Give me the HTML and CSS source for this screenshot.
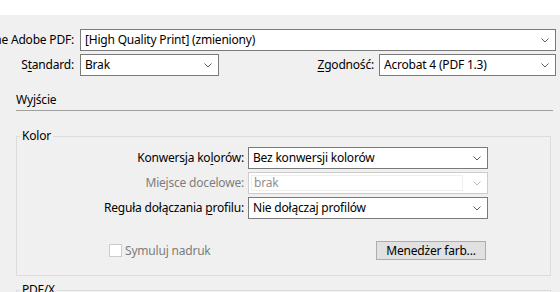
FILE: index.html
```html
<!DOCTYPE html>
<html lang="pl">
<head>
<meta charset="utf-8">
<title>Eksport Adobe PDF</title>
<link rel="stylesheet" href="styles.css">
</head>
<body>
<div class="topband"></div>
<div class="main">
  <div class="row">
    <div class="lbl lbl-main"><span>Ustawienie predefiniowane Adobe PDF:</span></div>
    <div class="combo combo-wide"><span class="val">[High Quality Print] (zmieniony)</span><svg class="chev" width="8" height="5" viewBox="0 0 8 5"><polyline points="0.5,0.5 4,4 7.5,0.5" /></svg></div>
  </div>
  <div class="row">
    <div class="lbl lbl-main"><span>S<u>t</u>andard:</span></div>
    <div class="combo combo-std"><span class="val">Brak</span><svg class="chev" width="8" height="5" viewBox="0 0 8 5"><polyline points="0.5,0.5 4,4 7.5,0.5" /></svg></div>
    <div class="lbl lbl-compat"><span><u>Z</u>godność:</span></div>
    <div class="combo combo-compat"><span class="val">Acrobat 4 (PDF 1.3)</span><svg class="chev" width="8" height="5" viewBox="0 0 8 5"><polyline points="0.5,0.5 4,4 7.5,0.5" /></svg></div>
  </div>

  <div class="section-head">Wyjście</div>

  <fieldset class="group">
    <legend>Kolor</legend>
    <div class="grow">
      <div class="lbl lbl-group"><span>Konwersja ko<u>l</u>orów:</span></div>
      <div class="combo combo-group"><span class="val">Bez konwersji kolorów</span><svg class="chev" width="8" height="5" viewBox="0 0 8 5"><polyline points="0.5,0.5 4,4 7.5,0.5" /></svg></div>
    </div>
    <div class="grow">
      <div class="lbl lbl-group disabled-text"><span>Miejsce docelowe:</span></div>
      <div class="combo combo-group combo-disabled"><span class="field">brak</span><svg class="chev" width="8" height="5" viewBox="0 0 8 5"><polyline points="0.5,0.5 4,4 7.5,0.5" /></svg></div>
    </div>
    <div class="grow">
      <div class="lbl lbl-group"><span>Reguła dołączania <u>p</u>rofilu:</span></div>
      <div class="combo combo-group"><span class="val">Nie dołączaj profilów</span><svg class="chev" width="8" height="5" viewBox="0 0 8 5"><polyline points="0.5,0.5 4,4 7.5,0.5" /></svg></div>
    </div>
    <div class="action-row">
      <span class="check"></span>
      <span class="check-label">Symuluj nadruk</span>
      <span class="button">Menedżer farb...</span>
    </div>
  </fieldset>

  <fieldset class="group group-next">
    <legend>PDF/X</legend>
  </fieldset>
</div>
</body>
</html>
```

FILE: styles.css
```css
* {
  box-sizing: border-box;
}

html, body {
  margin: 0;
  padding: 0;
}

body {
  width: 560px;
  height: 292px;
  overflow: hidden;
  background: #f0f0f0;
  color: #000;
  font-family: "Noto Sans", "Open Sans", sans-serif;
  font-size: 12px;
  line-height: 16px;
  letter-spacing: -0.2px;
}

u {
  text-decoration: underline;
  text-underline-offset: 2px;
  text-decoration-thickness: 1px;
}

.topband {
  height: 15px;
  background: #ffffff;
}

.main {
  padding-top: 14px;
}

.row {
  display: flex;
  align-items: center;
  height: 22px;
  margin-bottom: 3px;
}

.lbl {
  display: flex;
  justify-content: flex-end;
  white-space: nowrap;
  flex: none;
}

.lbl-main {
  width: 80px;
  padding-right: 6px;
}

.lbl-compat {
  margin-left: auto;
  padding-right: 5px;
}

.combo {
  display: flex;
  align-items: center;
  height: 22px;
  border: 1px solid #7a7a7a;
  background: #ffffff;
  padding-left: 4px;
  padding-right: 6px;
  white-space: nowrap;
  flex: none;
}

.combo .val {
  flex: 1;
  overflow: hidden;
}

.chev {
  flex: none;
  margin-left: 4px;
}

.chev polyline {
  fill: none;
  stroke: #5f5f5f;
  stroke-width: 1;
}

.combo-wide {
  flex: 1;
  margin-right: 4px;
}

.combo-std {
  width: 139px;
}

.combo-compat {
  width: 177px;
  margin-right: 4px;
}

.section-head {
  margin: 16px 7px 0 16px;
  padding-bottom: 2px;
  border-bottom: 1px solid #a0a0a0;
}

.group {
  margin: 17px 9px 0 16px;
  padding: 3px 62px 15px 0;
  border: 1px solid #dcdcdc;
  min-width: 0;
}

.group legend {
  margin-left: 3px;
  padding: 0 2px;
}

.grow {
  display: flex;
  align-items: center;
  height: 22px;
  margin-bottom: 3px;
}

.lbl-group {
  width: 231px;
  padding-right: 4px;
}

.combo-group {
  flex: 1;
}

.disabled-text {
  color: #7d7d7d;
}

.combo-disabled {
  border-color: #cccccc;
  padding: 2px 6px 2px 2px;
}

.combo-disabled .field {
  flex: 1;
  height: 100%;
  display: flex;
  align-items: center;
  padding-left: 2px;
  border: 1px solid #efefef;
  color: #8f8f8f;
  margin-right: 6px;
}

.combo-disabled .chev polyline {
  stroke: #bdbdbd;
}

.action-row {
  display: flex;
  align-items: center;
  height: 19px;
  margin-top: 22px;
}

.check {
  width: 13px;
  height: 13px;
  margin-left: 92px;
  border: 1px solid #cccccc;
  background: #ffffff;
  flex: none;
}

.check-label {
  margin-left: 3px;
  color: #7d7d7d;
}

.button {
  margin-left: auto;
  margin-right: 2px;
  width: 110px;
  height: 19px;
  display: flex;
  align-items: center;
  justify-content: center;
  background: #e1e1e1;
  border: 1px solid #adadad;
}

.group-next {
  margin-top: 6px;
  height: 40px;
  padding: 0;
}
```
